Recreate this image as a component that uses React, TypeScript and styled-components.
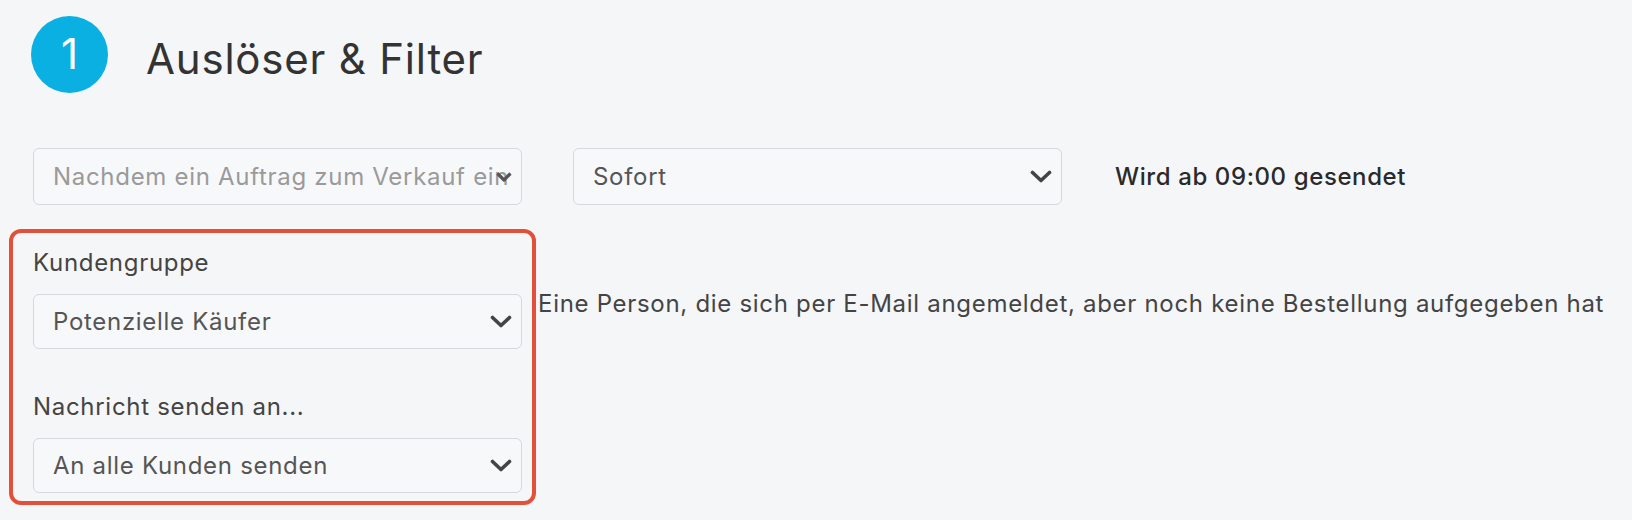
import React from "react";
import styled, { createGlobalStyle } from "styled-components";

const GlobalStyle = createGlobalStyle`
  html, body {
    margin: 0;
    padding: 0;
    background: #f5f6f8;
  }
  body {
    font-family: Inter, "Noto Sans", "Liberation Sans", sans-serif;
    color: #444;
  }
`;

const Page = styled.div`
  padding: 16px 0 0 31px;
  width: 1632px;
  height: 520px;
  box-sizing: border-box;
  overflow: hidden;
`;

const Header = styled.div`
  display: flex;
  align-items: center;
  gap: 38px;
  height: 77px;
`;

const StepBadge = styled.div`
  width: 77px;
  height: 77px;
  border-radius: 50%;
  background: #0bb0e2;
  color: #fff;
  display: flex;
  align-items: center;
  justify-content: center;
  font-size: 42px;
  line-height: 1;
  padding-bottom: 2px;
  box-sizing: border-box;
`;

const Title = styled.h1`
  margin: 8px 0 0 0;
  font-size: 42px;
  font-weight: 400;
  letter-spacing: 0.8px;
  color: #333;
`;

const TriggerRow = styled.div`
  display: flex;
  align-items: center;
  margin: 55px 0 0 2px;
  gap: 51px;
`;

const Field = styled.div<{ $muted?: boolean; $h?: number }>`
  width: 489px;
  height: ${(p) => p.$h ?? 57}px;
  box-sizing: border-box;
  border: 1.5px solid #d5d8dc;
  border-radius: 6px;
  background: #f7f8fa;
  display: flex;
  align-items: center;
  padding: 0 9px 0 19px;
  font-size: 24px;
  letter-spacing: 0.7px;
  color: ${(p) => (p.$muted ? "#9a9a9a" : "#555")};
`;

const FieldValue = styled.span<{ $overlap?: boolean }>`
  flex: 1;
  min-width: 0;
  overflow: hidden;
  white-space: nowrap;
  margin-right: ${(p) => (p.$overlap ? "-15px" : "8px")};
`;

const SendInfo = styled.div`
  margin-left: 2px;
  font-size: 24px;
  letter-spacing: 0.6px;
  font-weight: 500;
  color: #2a2a2a;
`;

const AudienceRow = styled.div`
  display: flex;
  align-items: flex-start;
  margin: 24px 0 0 -22px;
`;

const Highlight = styled.div`
  width: 527px;
  box-sizing: border-box;
  border: 4px solid #e24f3b;
  border-radius: 12px;
  padding: 15px 10px 8px 20px;
`;

const Label = styled.div<{ $gap?: number }>`
  font-size: 24px;
  letter-spacing: 0.7px;
  line-height: 30px;
  color: #444;
  margin: ${(p) => p.$gap ?? 0}px 0 16px 0;
`;

const Description = styled.div`
  margin: 60px 0 0 2px;
  font-size: 24px;
  letter-spacing: 0.7px;
  line-height: 30px;
  color: #444;
  white-space: nowrap;
`;

const Chevron = ({ small }: { small?: boolean }) =>
  small ? (
    <svg width="16" height="10" viewBox="0 0 16 10" style={{ flexShrink: 0 }}>
      <path d="M1.5 1.5 L8 8 L14.5 1.5" fill="none" stroke="#555" strokeWidth="3.2" strokeLinejoin="round" />
    </svg>
  ) : (
    <svg width="22" height="14" viewBox="0 0 22 14" style={{ flexShrink: 0 }}>
      <path d="M2.5 2.5 L11 10.5 L19.5 2.5" fill="none" stroke="#444" strokeWidth="3.6" strokeLinecap="round" strokeLinejoin="round" />
    </svg>
  );

type SelectProps = { value: string; muted?: boolean; overlap?: boolean; height?: number };

const SelectBox = ({ value, muted, overlap, height }: SelectProps) => (
  <Field $muted={muted} $h={height}>
    <FieldValue $overlap={overlap}>{value}</FieldValue>
    <Chevron small={overlap} />
  </Field>
);

const App = () => {
  return (
    <Page>
      <GlobalStyle />
      <Header>
        <StepBadge>1</StepBadge>
        <Title>Auslöser &amp; Filter</Title>
      </Header>
      <TriggerRow>
        <SelectBox value="Nachdem ein Auftrag zum Verkauf ein" muted overlap />
        <SelectBox value="Sofort" />
        <SendInfo>Wird ab 09:00 gesendet</SendInfo>
      </TriggerRow>
      <AudienceRow>
        <Highlight>
          <Label>Kundengruppe</Label>
          <SelectBox value="Potenzielle Käufer" height={55} />
          <Label $gap={43}>Nachricht senden an...</Label>
          <SelectBox value="An alle Kunden senden" height={55} />
        </Highlight>
        <Description>
          Eine Person, die sich per E-Mail angemeldet, aber noch keine Bestellung aufgegeben hat
        </Description>
      </AudienceRow>
    </Page>
  );
};

export default App;
